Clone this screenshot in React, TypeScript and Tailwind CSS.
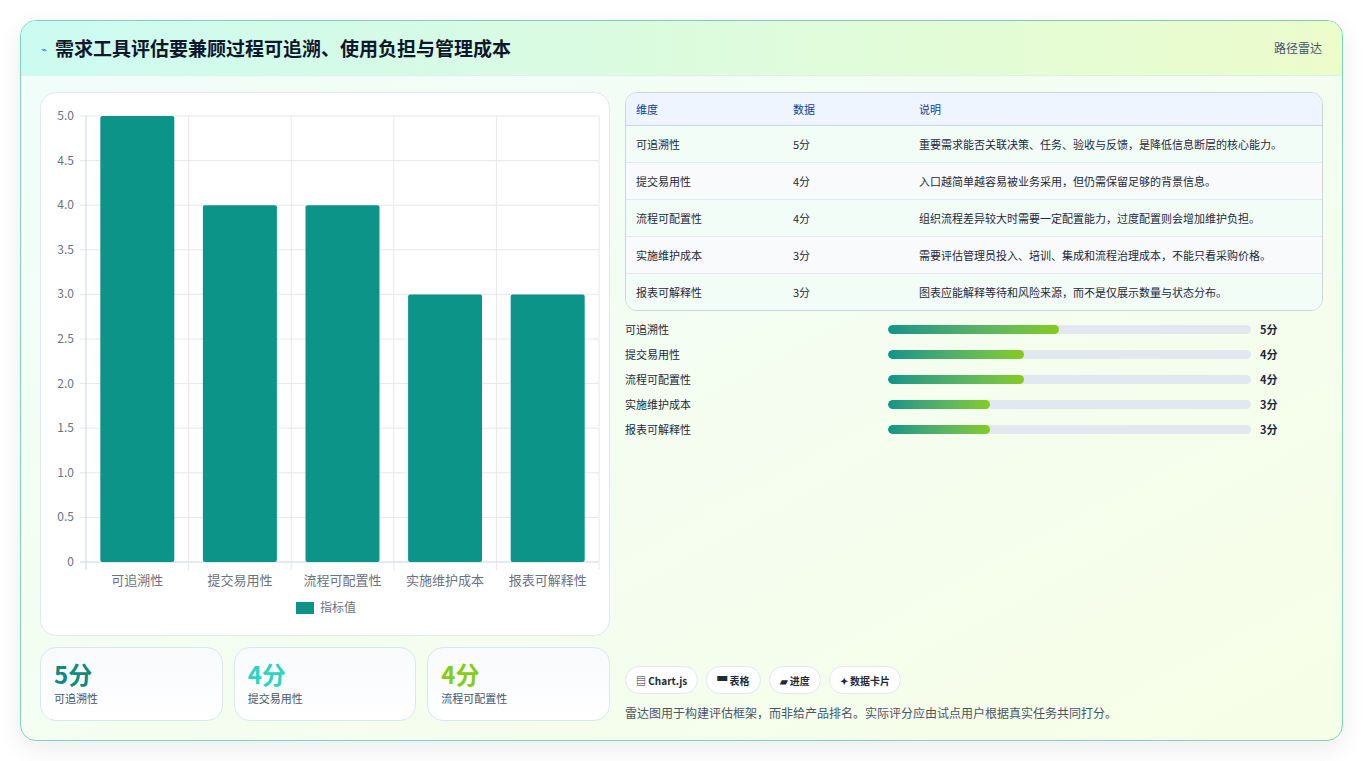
const font = { fontFamily: '"Noto Sans CJK SC", "Noto Sans", sans-serif' };

const rows = [
  { name: "可追溯性", score: 5, note: "重要需求能否关联决策、任务、验收与反馈，是降低信息断层的核心能力。", pct: 47 },
  { name: "提交易用性", score: 4, note: "入口越简单越容易被业务采用，但仍需保留足够的背景信息。", pct: 37.5 },
  { name: "流程可配置性", score: 4, note: "组织流程差异较大时需要一定配置能力，过度配置则会增加维护负担。", pct: 37.5 },
  { name: "实施维护成本", score: 3, note: "需要评估管理员投入、培训、集成和流程治理成本，不能只看采购价格。", pct: 28 },
  { name: "报表可解释性", score: 3, note: "图表应能解释等待和风险来源，而不是仅展示数量与状态分布。", pct: 28 },
];

function BarChart() {
  const left = 45, right = 558, top = 23, bottom = 469;
  const cw = (right - left) / 5;
  const unit = (bottom - top) / 5;
  const ticks = [0, 0.5, 1, 1.5, 2, 2.5, 3, 3.5, 4, 4.5, 5];
  return (
    <svg width="570" height="544" viewBox="0 0 570 544" style={font}>
      {ticks.map((t) => {
        const y = bottom - t * unit;
        return (
          <g key={t}>
            <line x1={left - 6} x2={right} y1={y} y2={y} stroke={t === 0 ? "#cbd5e1" : "#e5e7eb"} />
            <text x={left - 12} y={y + 4} textAnchor="end" fontSize="12" fill="#6b7280">
              {t === 0 ? "0" : t.toFixed(1)}
            </text>
          </g>
        );
      })}
      {[0, 1, 2, 3, 4, 5].map((i) => (
        <line key={i} x1={left + i * cw} x2={left + i * cw} y1={top} y2={bottom + 8} stroke={i === 0 ? "#cbd5e1" : "#e5e7eb"} />
      ))}
      {rows.map((r, i) => {
        const cx = left + cw * i + cw / 2;
        const h = r.score * unit;
        return (
          <g key={r.name}>
            <rect x={cx - 37} y={bottom - h} width="74" height={h} rx="2" fill="#0d9488" />
            <text x={cx} y={492} textAnchor="middle" fontSize="13" fill="#6b7280">{r.name}</text>
          </g>
        );
      })}
      <rect x="255" y="509" width="18" height="12" fill="#0d9488" />
      <text x="279" y="519" fontSize="12" fill="#6b7280">指标值</text>
    </svg>
  );
}

export default function App() {
  return (
    <div className="w-[1363px] h-[761px] bg-white p-5" style={font}>
      <div className="h-[721px] rounded-2xl border border-[#7dd3c0] overflow-hidden shadow-[0_8px_24px_rgba(15,23,42,0.08)] bg-gradient-to-br from-[#f0fdfa] to-[#f7fee7] flex flex-col">
        <div className="h-[55px] flex items-center justify-between px-5 bg-gradient-to-r from-[#ccfbf1] to-[#ecfccb] border-b border-[#d9f2ea]">
          <div className="flex items-center gap-2">
            <span className="text-[10px] text-[#3b82f6]">⌁</span>
            <h1 className="text-[19px] font-bold text-[#0f172a]">需求工具评估要兼顾过程可追溯、使用负担与管理成本</h1>
          </div>
          <span className="text-[12px] text-[#475569]">路径雷达</span>
        </div>
        <div className="flex-1 flex gap-[15px] px-[19px] pt-4 pb-[18px]">
          <div className="w-[570px] flex flex-col gap-[11px]">
            <div className="h-[544px] rounded-2xl bg-white border border-[#e2e8f0]">
              <BarChart />
            </div>
            <div className="flex gap-[11px]">
              {[
                ["5分", "可追溯性", "text-[#0f8a7e]"],
                ["4分", "提交易用性", "text-[#2dd4bf]"],
                ["4分", "流程可配置性", "text-[#84cc16]"],
              ].map(([v, l, c]) => (
                <div key={l} className="flex-1 h-[74px] rounded-2xl border border-[#dbe7f0] bg-gradient-to-b from-[#f8fafc] to-white px-[13px] pt-[10px]">
                  <div className={`text-[24px] font-bold leading-8 ${c}`}>{v}</div>
                  <div className="text-[11px] text-[#475569]">{l}</div>
                </div>
              ))}
            </div>
          </div>
          <div className="flex-1 flex flex-col">
            <div className="rounded-xl border border-[#cbd5e1] overflow-hidden text-[11px] text-[#1e293b]">
              <div className="flex h-[33px] items-center bg-[#eef5ff] text-[#1e3a8a] border-b border-[#cbd5e1]">
                <div className="w-[167px] pl-[10px]">维度</div>
                <div className="w-[126px]">数据</div>
                <div className="flex-1">说明</div>
              </div>
              {rows.map((r, i) => (
                <div key={r.name} className={`flex py-[9px] leading-[18px] border-b border-[#e2e8f0] last:border-b-0 ${i % 2 ? "bg-[#f8fafc]" : "bg-[#f3fdf7]"}`}>
                  <div className="w-[167px] pl-[10px]">{r.name}</div>
                  <div className="w-[126px]">{r.score}分</div>
                  <div className="flex-1 pr-[14px]">{r.note}</div>
                </div>
              ))}
            </div>
            <div className="flex flex-col gap-[9px] mt-[10px]">
              {rows.map((r) => (
                <div key={r.name} className="flex items-center h-4 text-[11px] text-[#1e293b]">
                  <div className="w-[263px]">{r.name}</div>
                  <div className="w-[363px] h-[9px] rounded-full bg-[#e2e8f0] overflow-hidden">
                    <div className="h-full rounded-full bg-gradient-to-r from-[#0d9488] to-[#84cc16]" style={{ width: `${r.pct}%` }} />
                  </div>
                  <div className="ml-[9px] font-bold">{r.score}分</div>
                </div>
              ))}
            </div>
            <div className="mt-auto flex gap-[8px] mb-[10px]">
              {["▤ Chart.js", "▀ 表格", "▰ 进度", "✦ 数据卡片"].map((c) => (
                <span key={c} className="h-[28px] px-[10px] flex items-center rounded-full border border-[#e2e8f0] bg-white text-[10px] font-bold text-[#1e293b]">{c}</span>
              ))}
            </div>
            <p className="text-[12px] text-[#475569]">雷达图用于构建评估框架，而非给产品排名。实际评分应由试点用户根据真实任务共同打分。</p>
          </div>
        </div>
      </div>
    </div>
  );
}
